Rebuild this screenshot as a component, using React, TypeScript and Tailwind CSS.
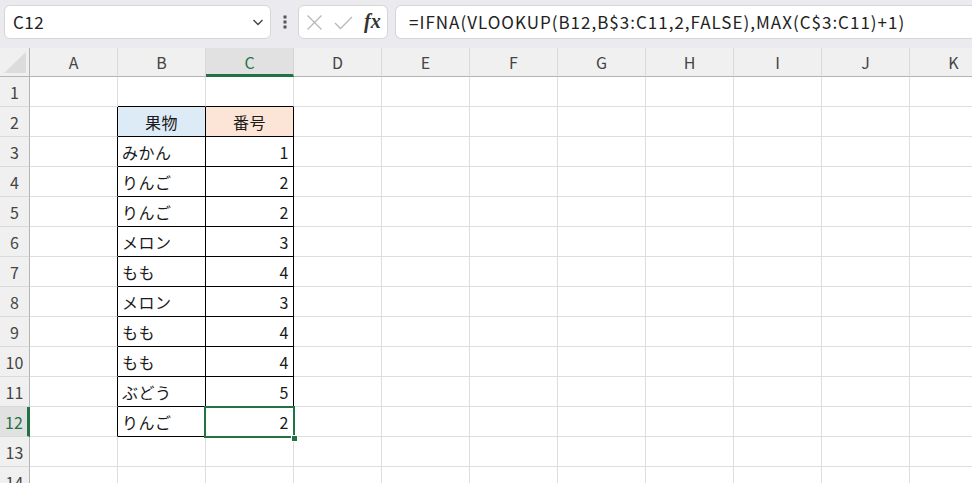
import React from "react";

const COLS = ["A", "B", "C", "D", "E", "F", "G", "H", "I", "J", "K"];

const DATA: Record<number, [string, string]> = {
  2: ["果物", "番号"],
  3: ["みかん", "1"],
  4: ["りんご", "2"],
  5: ["りんご", "2"],
  6: ["メロン", "3"],
  7: ["もも", "4"],
  8: ["メロン", "3"],
  9: ["もも", "4"],
  10: ["もも", "4"],
  11: ["ぶどう", "5"],
  12: ["りんご", "2"],
};

const font = { fontFamily: '"Noto Sans CJK JP", "Noto Sans", sans-serif' };

const inTable = (r: number, c: number) => r >= 2 && r <= 12 && (c === 1 || c === 2);

const Cell: React.FC<{ r: number; c: number }> = ({ r, c }) => {
  // right border black if this cell or its right neighbour belongs to the table
  const rightBlack = inTable(r, c) || inTable(r, c + 1);
  const bottomBlack = inTable(r, c) || inTable(r + 1, c);
  const row = DATA[r];
  let content: React.ReactNode = null;
  let bg = "bg-white";
  let align = "justify-start pl-[4px]";

  if (row && c === 1) {
    content = row[0];
    if (r === 2) {
      bg = "bg-[#ddebf7]";
      align = "justify-center";
    }
  }
  if (row && c === 2) {
    content = row[1];
    if (r === 2) {
      bg = "bg-[#fce4d6]";
      align = "justify-center";
    } else {
      align = "justify-end pr-[4px]";
    }
  }

  const selected = r === 12 && c === 2;

  return (
    <div
      className={`relative h-[30px] flex items-center text-[16px] text-[#1a1a1a] border-r border-b ${bg} ${align} ${
        rightBlack ? "border-r-black" : "border-r-[#dedede]"
      } ${bottomBlack ? "border-b-black" : "border-b-[#dedede]"} ${selected ? "z-10" : ""}`}
    >
      <span className="leading-none pt-[1px] tracking-[0.5px]">{content}</span>
      {selected && (
        <>
          <div className="absolute z-10 left-[-2px] top-[-1px] w-[91px] h-[32px] border-2 border-[#217346]" />
          <div className="absolute z-20 left-[85px] top-[28px] w-[7px] h-[7px] bg-[#217346] border border-white" />
        </>
      )}
    </div>
  );
};

export default function App() {
  const rows = Array.from({ length: 14 }, (_, i) => i + 1);

  return (
    <div className="w-[972px] h-[483px] overflow-hidden bg-white" style={font}>
      {/* Formula bar */}
      <div className="h-[48px] bg-[#ebebef] flex items-start pt-[5px] pl-[4px] gap-0">
        <div className="w-[267px] h-[34px] bg-white rounded-[6px] border border-[#d6d6d9] flex items-center justify-between pl-[8px] pr-[5px]">
          <span className="text-[17px] text-[#222] tracking-[0.5px]">C12</span>
          <svg width="14" height="14" viewBox="0 0 14 14">
            <path d="M2.5 5 L7 9.5 L11.5 5" fill="none" stroke="#444" strokeWidth="1.4" />
          </svg>
        </div>
        <div className="w-[27px] h-[34px] flex items-center justify-center">
          <svg width="4" height="14" viewBox="0 0 4 14">
            <rect x="0.5" y="0.5" width="3" height="3" fill="#555" />
            <rect x="0.5" y="5.5" width="3" height="3" fill="#555" />
            <rect x="0.5" y="10.5" width="3" height="3" fill="#555" />
          </svg>
        </div>
        <div className="w-[90px] h-[34px] bg-white rounded-[6px] border border-[#d6d6d9] flex items-center pl-[7px] gap-[11px]">
          <svg width="17" height="17" viewBox="0 0 17 17">
            <path d="M1.5 1.5 L15.5 15.5 M15.5 1.5 L1.5 15.5" stroke="#b8b8b8" strokeWidth="1.3" fill="none" />
          </svg>
          <svg width="19" height="17" viewBox="0 0 19 17">
            <path d="M1 9 L6.5 14.5 L18 3" stroke="#b8b8b8" strokeWidth="1.3" fill="none" />
          </svg>
          <span
            className="text-[20px] italic font-bold text-[#333] leading-none -mt-[2px]"
            style={{ fontFamily: '"Liberation Serif", serif' }}
          >
            fx
          </span>
        </div>
        <div className="ml-[7px] flex-1 h-[34px] bg-white rounded-l-[6px] border border-r-0 border-[#d6d6d9] flex items-center pl-[13px]">
          <span className="text-[17px] text-[#222] tracking-[1px] whitespace-nowrap">
            =IFNA(VLOOKUP(B12,B$3:C11,2,FALSE),MAX(C$3:C11)+1)
          </span>
        </div>
      </div>

      {/* Sheet grid */}
      <div className="grid grid-cols-[30px_repeat(11,88px)]">
        {/* column header row */}
        <div className="h-[29px] bg-[#f0f0f0] border-r border-b border-[#b4b4b4] flex items-end justify-end pr-[3px] pb-[3px]">
          <svg width="22" height="21" viewBox="0 0 22 21">
            <polygon points="22,0 22,21 0,21" fill="#dcdcdc" />
          </svg>
        </div>
        {COLS.map((col, i) =>
          i === 2 ? (
            <div
              key={col}
              className="h-[29px] bg-[#e1e1e1] border-r border-r-[#d4d4d4] border-b-[3px] border-b-[#217346] flex items-center justify-center text-[16px] text-[#217346] pt-[2px]"
            >
              {col}
            </div>
          ) : (
            <div
              key={col}
              className="h-[29px] bg-[#f0f0f0] border-r border-r-[#d9d9d9] border-b border-b-[#b4b4b4] flex items-center justify-center text-[16px] text-[#444]"
            >
              {col}
            </div>
          )
        )}

        {rows.map((r) => (
          <React.Fragment key={r}>
            {r === 12 ? (
              <div className="h-[30px] bg-[#e1e1e1] border-r-[3px] border-r-[#217346] border-b border-b-[#d9d9d9] flex items-center justify-center text-[16px] text-[#217346] pl-[1px]">
                {r}
              </div>
            ) : (
              <div className="h-[30px] bg-[#f0f0f0] border-r border-r-[#b4b4b4] border-b border-b-[#d9d9d9] flex items-center justify-center text-[16px] text-[#444]">
                {r}
              </div>
            )}
            {COLS.map((_, c) => (
              <Cell key={c} r={r} c={c} />
            ))}
          </React.Fragment>
        ))}
      </div>
    </div>
  );
}
